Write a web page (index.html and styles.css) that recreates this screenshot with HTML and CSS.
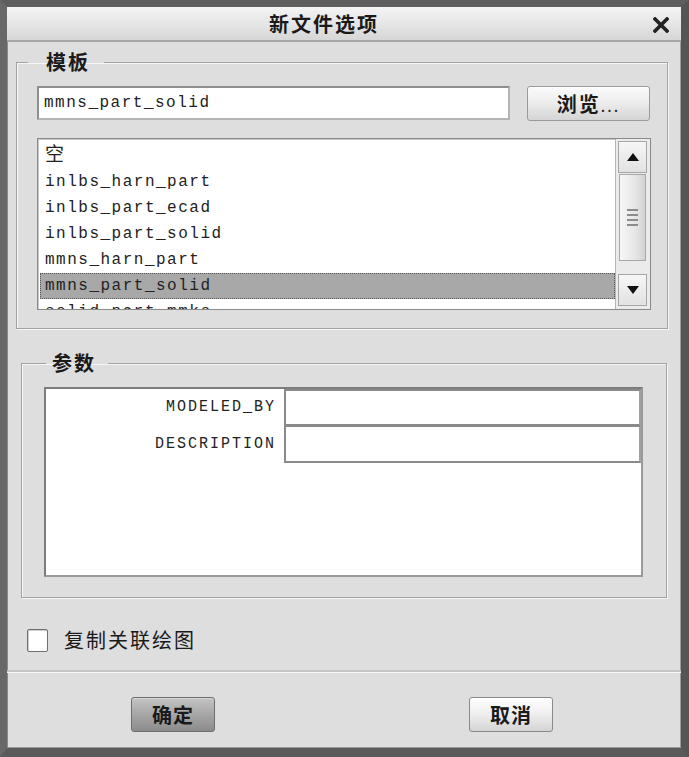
FILE: index.html
```html
<!DOCTYPE html>
<html lang="zh-CN">
<head>
	<meta charset="UTF-8">
	<title>新文件选项</title>
	<link rel="stylesheet" href="styles.css">
</head>
<body>
	<div class="window">
		<div class="titlebar">
			<span class="title">新文件选项</span>
			<span class="close">
				<svg width="16" height="16" viewBox="0 0 16 16"><path d="M2 2 L14 14 M14 2 L2 14" stroke="#222" stroke-width="3.6" stroke-linecap="square"/></svg>
			</span>
		</div>
		<div class="content">
			<fieldset class="group group-tpl">
				<legend>模板</legend>
				<div class="tpl-row">
					<div class="text-input">mmns_part_solid</div>
					<button class="btn btn-browse"><b>浏览</b>...</button>
				</div>
				<div class="listbox">
					<ul class="list-items">
						<li>空</li>
						<li>inlbs_harn_part</li>
						<li>inlbs_part_ecad</li>
						<li>inlbs_part_solid</li>
						<li>mmns_harn_part</li>
						<li class="selected">mmns_part_solid</li>
						<li>solid_part_mmks</li>
					</ul>
					<div class="scrollbar">
						<div class="sb-btn">
							<svg width="12" height="8" viewBox="0 0 12 8"><path d="M6 0 L12 8 L0 8 Z" fill="#111"/></svg>
						</div>
						<div class="sb-thumb">
							<span></span><span></span><span></span><span></span>
						</div>
						<div class="sb-track"></div>
						<div class="sb-btn">
							<svg width="12" height="8" viewBox="0 0 12 8"><path d="M0 0 L12 0 L6 8 Z" fill="#111"/></svg>
						</div>
					</div>
				</div>
			</fieldset>

			<fieldset class="group group-param">
				<legend>参数</legend>
				<div class="param-table">
					<div class="param-row">
						<div class="param-name">MODELED_BY</div>
						<div class="param-value"></div>
					</div>
					<div class="param-row">
						<div class="param-name">DESCRIPTION</div>
						<div class="param-value"></div>
					</div>
				</div>
			</fieldset>

			<label class="check-row">
				<span class="checkbox"></span>
				<span class="check-label">复制关联绘图</span>
			</label>
		</div>
		<div class="footer">
			<button class="btn btn-ok">确定</button>
			<button class="btn btn-cancel">取消</button>
		</div>
	</div>
</body>
</html>
```

FILE: styles.css
```css
html,body{
	margin:0;
	padding:0;
	height:100%;
}
*{
	box-sizing:border-box;
}
body{
	background-color:#dcdcdc;
	font-family:"Noto Sans CJK SC","Liberation Sans",sans-serif;
	color:#1a1a1a;
}
.window{
	width:689px;
	height:757px;
	display:flex;
	flex-direction:column;
	background-color:#dedede;
	border-style:solid;
	border-width:7px 8px 9px 7px;
	border-color:#5e5e5e #555 #5a5a5a #686868;
	box-shadow:inset 1px 1px 0 #8c8c8c, inset -1px -1px 0 #9a9a9a;
}
.titlebar{
	height:35px;
	flex:none;
	display:flex;
	align-items:center;
	position:relative;
	background:linear-gradient(#f4f4f4,#e6e6e6 50%,#d6d6d6);
	border-bottom:2px solid #a6a6a6;
}
.title{
	flex:1;
	text-align:center;
	padding-right:40px;
	font-size:20px;
	font-weight:bold;
	letter-spacing:2px;
	line-height:35px;
}
.close{
	position:absolute;
	right:12px;
	top:10px;
	width:16px;
	height:16px;
}
.close svg{
	display:block;
}
.content{
	flex:1;
	display:flex;
	flex-direction:column;
	padding-top:8px;
}
.group{
	margin:0;
	border:1px solid #a2a2a2;
	box-shadow:inset 1px 1px 0 #f6f6f6, 1px 1px 0 #f6f6f6;
	min-width:0;
}
.group legend{
	font-size:20px;
	font-weight:bold;
	line-height:24px;
	height:24px;
	letter-spacing:2px;
}
.group-tpl{
	margin:0 13px 0 9px;
	padding:12px 17px 18px 20px;
}
.group-tpl legend{
	margin-left:-9px;
	padding:0 14px 0 18px;
}
.tpl-row{
	display:flex;
	gap:17px;
	align-items:flex-start;
}
.text-input{
	width:473px;
	height:34px;
	background:#fff;
	border:2px solid #8e8e8e;
	border-right-color:#b4b4b4;
	border-bottom-color:#b4b4b4;
	padding-left:5px;
	font-family:"Liberation Mono",monospace;
	font-size:16px;
	letter-spacing:1.5px;
	line-height:30px;
	color:#222;
}
.btn{
	font-family:"Noto Sans CJK SC","Liberation Sans",sans-serif;
	color:#1a1a1a;
	border-radius:3px;
	cursor:pointer;
	padding:0;
}
.btn-browse{
	width:123px;
	height:35px;
	border:1px solid #9a9a9a;
	background:linear-gradient(#fbfbfb,#ececec 50%,#d4d4d4);
	box-shadow:inset 0 1px 0 #fff;
	font-size:16px;
	letter-spacing:2px;
}
.btn-browse b{
	font-size:20px;
}
.listbox{
	margin-top:17px;
	width:614px;
	height:172px;
	display:flex;
	background:#fff;
	border:1px solid #8a8a8a;
	box-shadow:inset 1px 1px 0 #c8c8c8;
	overflow:hidden;
}
.list-items{
	flex:1;
	list-style:none;
	margin:0;
	padding:4px 0 0 2px;
	overflow:hidden;
}
.list-items li{
	height:26px;
	line-height:26px;
	padding-left:5px;
	font-family:"Liberation Mono","Noto Sans CJK SC",monospace;
	font-size:16px;
	letter-spacing:1.5px;
	color:#222;
	white-space:nowrap;
}
.list-items li:first-child{
	font-size:19px;
	letter-spacing:0;
}
.list-items li.selected{
	background:#a8a8a8;
	outline:1px dotted #555;
	outline-offset:-1px;
}
.scrollbar{
	width:35px;
	flex:none;
	display:flex;
	flex-direction:column;
	padding:2px 3px 3px 2px;
	background:#ebebeb;
	border-left:1px solid #b6b6b6;
}
.sb-btn{
	height:32px;
	flex:none;
	display:flex;
	align-items:center;
	justify-content:center;
	background:linear-gradient(#f6f6f6,#e2e2e2);
	border:1px solid #a6a6a6;
}
.sb-thumb{
	height:87px;
	flex:none;
	margin:1px 1px 0;
	display:flex;
	flex-direction:column;
	align-items:center;
	justify-content:center;
	gap:3px;
	background:linear-gradient(90deg,#f7f7f7,#e6e6e6 60%,#d2d2d2);
	border:1px solid #a8a8a8;
}
.sb-thumb span{
	width:11px;
	height:2px;
	background:#8c8c8c;
}
.sb-track{
	flex:1;
}
.group-param{
	margin:22px 14px 0 14px;
	padding:12px 23px 20px 22px;
}
.group-param legend{
	margin-left:2px;
	padding:0 12px 0 6px;
}
.param-table{
	height:190px;
	background:#fff;
	border:2px solid #7c7c7c;
	border-right-color:#9a9a9a;
	border-bottom-color:#9a9a9a;
}
.param-row{
	display:flex;
	height:37px;
}
.param-name{
	width:238px;
	text-align:right;
	padding-right:8px;
	font-family:"Liberation Mono",monospace;
	font-size:15px;
	letter-spacing:2px;
	line-height:37px;
	color:#222;
	transform:scaleY(1.1);
}
.param-value{
	flex:1;
	border:2px solid #8a8a8a;
	border-right-color:#a0a0a0;
	margin-right:0;
}
.param-row + .param-row .param-value{
	border-top-width:1px;
}
.check-row{
	display:flex;
	align-items:center;
	gap:16px;
	margin:30px 0 0 20px;
	height:24px;
}
.checkbox{
	width:21px;
	height:23px;
	background:#fff;
	border:1px solid #6e6e6e;
	border-radius:2px;
	box-shadow:inset 1px 1px 0 #cfcfcf;
}
.check-label{
	font-size:20px;
	letter-spacing:2px;
	line-height:24px;
}
.footer{
	height:78px;
	flex:none;
	display:flex;
	align-items:flex-start;
	gap:254px;
	padding:25px 0 0 124px;
	border-top:2px solid #c4c4c4;
	box-shadow:inset 0 1px 0 #f8f8f8;
}
.btn-ok,
.btn-cancel{
	width:84px;
	height:35px;
	font-size:20px;
	font-weight:bold;
	letter-spacing:1px;
}
.btn-ok{
	border:1px solid #6e6e6e;
	background:linear-gradient(#c4c4c4,#a6a6a6 50%,#8c8c8c);
	box-shadow:inset 0 1px 0 #d6d6d6;
}
.btn-cancel{
	border:1px solid #8a8a8a;
	background:linear-gradient(#ffffff,#eeeeee 50%,#d4d4d4);
	box-shadow:inset 0 1px 0 #fff;
}
```
